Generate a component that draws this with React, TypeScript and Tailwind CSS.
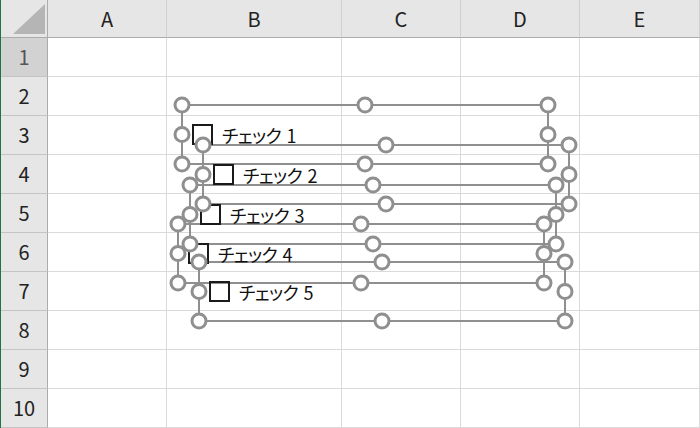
import React from 'react';

const columns = ['A', 'B', 'C', 'D', 'E'];
const rows = [1, 2, 3, 4, 5, 6, 7, 8, 9, 10];

// selection frames of the form controls, in page pixels
const controls = [
  { x: 182, y: 105, label: 'チェック 1' },
  { x: 203, y: 145, label: 'チェック 2' },
  { x: 190, y: 185, label: 'チェック 3' },
  { x: 178, y: 224, label: 'チェック 4' },
  { x: 199, y: 262, label: 'チェック 5' },
];
const FW = 366;
const FH = 59;

function handlesOf(x: number, y: number): [number, number][] {
  const xs = [x, x + FW / 2, x + FW];
  const ys = [y, y + FH / 2, y + FH];
  return [
    [xs[0], ys[0]], [xs[1], ys[0]], [xs[2], ys[0]],
    [xs[0], ys[1]], [xs[2], ys[1]],
    [xs[0], ys[2]], [xs[1], ys[2]], [xs[2], ys[2]],
  ];
}

export default function App() {
  return (
    <div className="relative w-[700px] h-[428px] overflow-hidden bg-white border-l border-[#217346] font-['Noto_Sans_CJK_JP','Noto_Sans',sans-serif]">
      <div className="grid grid-cols-[47px_119px_175px_119px_119px_120px] grid-rows-[38px_repeat(10,39px)]">
        {/* corner */}
        <div className="relative bg-[#e6e6e6] border-r border-b border-[#ababab]">
          <svg className="absolute inset-0" width="47" height="38">
            <polygon points="12,34 44,34 44,4" fill="#b5b5b5" />
          </svg>
        </div>
        {columns.map((c) => (
          <div
            key={c}
            className="flex items-center justify-center bg-[#e6e6e6] border-r border-r-[#d0d0d0] border-b border-b-[#ababab] text-[20px] text-[#222]"
          >
            {c}
          </div>
        ))}
        {rows.map((r) => (
          <React.Fragment key={r}>
            <div
              className={
                r === 1
                  ? 'flex items-center justify-center bg-[#d2d2d2] border-r border-r-[#ababab] border-b border-b-[#c4c4c4] text-[20px] text-[#555]'
                  : 'flex items-center justify-center bg-[#e6e6e6] border-r border-r-[#ababab] border-b border-b-[#c4c4c4] text-[20px] text-[#222]'
              }
            >
              {r}
            </div>
            {columns.map((c) => (
              <div key={c} className="border-r border-b border-[#dadada]" />
            ))}
          </React.Fragment>
        ))}
      </div>

      {/* selection frame lines */}
      <svg className="absolute left-0 top-0 pointer-events-none" width="700" height="428">
        {controls.map((c) => (
          <rect key={c.label} x={c.x - 1} y={c.y} width={FW} height={FH} fill="none" stroke="#8f8f8f" strokeWidth={2} />
        ))}
      </svg>

      {/* checkbox controls */}
      {controls.map((c) => (
        <div
          key={c.label}
          className="absolute flex items-center"
          style={{ left: c.x + 10 - 1, top: c.y, height: FH }}
        >
          <div className="w-[21px] h-[21px] border-2 border-[#1a1a1a]" />
          <span className="ml-[9px] text-[18px] font-normal leading-none text-[#111] tracking-[-0.6px] [word-spacing:2px] [font-feature-settings:'palt']">{c.label}</span>
        </div>
      ))}

      {/* sizing handles */}
      <svg className="absolute left-0 top-0 pointer-events-none" width="700" height="428">
        {controls.map((c) =>
          handlesOf(c.x - 1, c.y).map(([cx, cy], i) => (
            <circle key={c.label + i} cx={cx} cy={cy} r={7} fill="#fff" stroke="#8f8f8f" strokeWidth={3} />
          ))
        )}
      </svg>
    </div>
  );
}
